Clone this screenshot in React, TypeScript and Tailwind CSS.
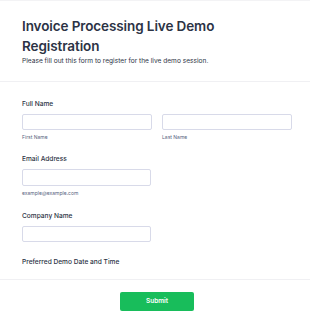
export default function App() {
  const font = { fontFamily: "Inter, 'Noto Sans', sans-serif" };
  return (
    <div
      className="bg-white w-[310px] h-[329px] overflow-hidden border-t border-[#f3f3f5] text-[#2c3345]"
      style={font}
    >
      <div className="px-[22px] pt-[15px] h-[81px] border-b border-[#f0f0f3]">
        <h1 className="text-[13.5px] leading-[20px] font-semibold tracking-[-0.1px]">
          Invoice Processing Live Demo
          <br />
          Registration
        </h1>
        <p className="text-[6.6px] leading-[9px] mt-[1px] text-[#2c3345]">
          Please fill out this form to register for the live demo session.
        </p>
      </div>

      <div className="pl-[22px] pr-[18px] pt-[17px] flex flex-col h-[198px] border-b border-[#f0f0f3]">
        <label className="text-[6.6px] leading-[10px] font-medium">Full Name</label>
        <div className="flex gap-[10px] mt-[5px]">
          <div className="flex flex-col w-[130px]">
            <div className="h-[16px] border border-[#d8dae9] rounded-[2px] bg-white" />
            <span className="text-[5px] leading-[7px] mt-[4px] text-[#57647e]">First Name</span>
          </div>
          <div className="flex flex-col w-[130px]">
            <div className="h-[16px] border border-[#d8dae9] rounded-[2px] bg-white" />
            <span className="text-[5px] leading-[7px] mt-[4px] text-[#57647e]">Last Name</span>
          </div>
        </div>

        <label className="text-[6.6px] leading-[10px] font-medium mt-[13px]">Email Address</label>
        <div className="w-[129px] h-[17px] border border-[#d8dae9] rounded-[2px] mt-[5px]" />
        <span className="text-[5px] leading-[7px] mt-[4px] text-[#57647e]">example@example.com</span>

        <label className="text-[6.6px] leading-[10px] font-medium mt-[14px]">Company Name</label>
        <div className="w-[129px] h-[16px] border border-[#d8dae9] rounded-[2px] mt-[5px]" />

        <label className="text-[6.6px] leading-[10px] font-medium mt-[15px]">
          Preferred Demo Date and Time
        </label>
      </div>

      <div className="flex justify-center pt-[12px] pl-[4px]">
        <button className="w-[74px] h-[19px] rounded-[2px] bg-[#18bd5b] text-white text-[6.5px] font-semibold">
          Submit
        </button>
      </div>
    </div>
  );
}
